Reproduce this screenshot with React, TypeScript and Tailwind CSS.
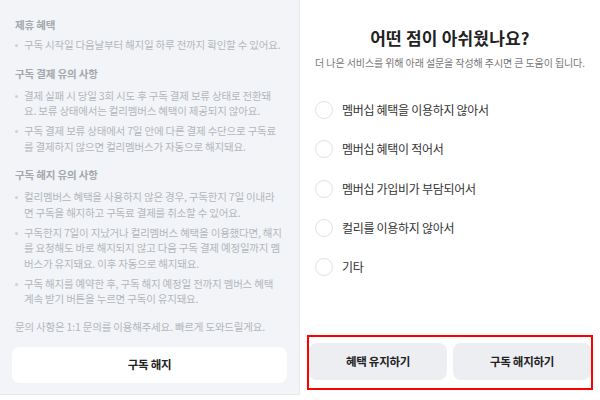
import React from 'react';

const font = { fontFamily: '"Noto Sans CJK KR", "Noto Sans", sans-serif' };

type Section = { title: string; items: string[][] };

// lines are broken by hand to follow the original wrap
const sections: Section[] = [
  {
    title: '제휴 혜택',
    items: [['구독 시작일 다음날부터 해지일 하루 전까지 확인할 수 있어요.']],
  },
  {
    title: '구독 결제 유의 사항',
    items: [
      ['결제 실패 시 당일 3회 시도 후 구독 결제 보류 상태로 전환돼', '요. 보류 상태에서는 컬리멤버스 혜택이 제공되지 않아요.'],
      ['구독 결제 보류 상태에서 7일 안에 다른 결제 수단으로 구독료', '를 결제하지 않으면 컬리멤버스가 자동으로 해지돼요.'],
    ],
  },
  {
    title: '구독 해지 유의 사항',
    items: [
      ['컬리멤버스 혜택을 사용하지 않은 경우, 구독한지 7일 이내라', '면 구독을 해지하고 구독료 결제를 취소할 수 있어요.'],
      [
        '구독한지 7일이 지났거나 컬리멤버스 혜택을 이용했다면, 해지',
        '를 요청해도 바로 해지되지 않고 다음 구독 결제 예정일까지 멤',
        '버스가 유지돼요. 이후 자동으로 해지돼요.',
      ],
      ['구독 해지를 예약한 후, 구독 해지 예정일 전까지 멤버스 혜택', '계속 받기 버튼을 누르면 구독이 유지돼요.'],
    ],
  },
];

const reasons = [
  '멤버십 혜택을 이용하지 않아서',
  '멤버십 혜택이 적어서',
  '멤버십 가입비가 부담되어서',
  '컬리를 이용하지 않아서',
  '기타',
];

const NoticePanel = () => (
  <div className="w-[300px] h-[395px] shrink-0 bg-[#f2f4f7] border-r border-b border-[#e6e8ec] px-[15px] pt-[17px] flex flex-col">
    {sections.map((s, i) => (
      <div key={s.title} className={i > 0 ? 'mt-[13px]' : ''}>
        <h3 className="text-[10.5px] font-bold leading-[16px] tracking-[-0.15px] text-[#a3a7ae]">{s.title}</h3>
        <ul className={`${i === 0 ? 'mt-[4px]' : 'mt-[6px]'} flex flex-col gap-[4.5px]`}>
          {s.items.map((lines) => (
            <li key={lines[0]} className="relative pl-[9px] text-[10.5px] leading-[15.5px] tracking-[-0.2px] text-[#b3b7bd]">
              <span className="absolute left-[0px] top-[7px] w-[3px] h-[3px] rounded-full bg-[#cdd1d6]" />
              {lines.map((l) => (
                <span key={l} className="block whitespace-nowrap">{l}</span>
              ))}
            </li>
          ))}
        </ul>
      </div>
    ))}
    <p className="mt-[12px] text-[10.5px] leading-[15.5px] tracking-[-0.2px] text-[#b3b7bd] whitespace-nowrap">
      문의 사항은 1:1 문의를 이용해주세요. 빠르게 도와드릴게요.
    </p>
    <button className="mt-[13px] -mx-[3px] h-[36px] rounded-[8px] bg-white text-[11.5px] font-bold tracking-[-0.3px] text-[#222]">
      구독 해지
    </button>
  </div>
);

const SurveyPanel = () => (
  <div className="flex-1 h-[400px] bg-white flex flex-col px-[7px] pb-[10px]">
    <h2 className="mt-[26px] text-center text-[17px] leading-[24px] font-bold tracking-[0.2px] text-[#222]">
      어떤 점이 아쉬웠나요?
    </h2>
    <p className="mt-[6px] text-center text-[10px] leading-[14px] tracking-[-0.1px] text-[#777] whitespace-nowrap">
      더 나은 서비스를 위해 아래 설문을 작성해 주시면 큰 도움이 됩니다.
    </p>
    <div className="mt-[28px] flex flex-col gap-[15.25px] pl-[8px]">
      {reasons.map((r) => (
        <label key={r} className="flex items-center h-[24px] gap-[9px]">
          <span className="w-[18px] h-[18px] rounded-full border-[1.5px] border-[#e2e2e2] bg-white" />
          <span className="text-[12px] tracking-[-0.3px] text-[#333]">{r}</span>
        </label>
      ))}
    </div>
    <div className="mt-auto border-2 border-[#ff0000] pt-[6px] pb-[8px] flex gap-[6px]">
      <button className="flex-1 h-[37px] rounded-[8px] bg-[#eceef2] text-[11.5px] font-bold tracking-[-0.3px] text-[#222]">
        혜택 유지하기
      </button>
      <button className="flex-1 h-[37px] rounded-[8px] bg-[#eceef2] text-[11.5px] font-bold tracking-[-0.3px] text-[#222]">
        구독 해지하기
      </button>
    </div>
  </div>
);

export default function App() {
  return (
    <div className="w-[600px] h-[400px] flex bg-white overflow-hidden" style={font}>
      <NoticePanel />
      <SurveyPanel />
    </div>
  );
}
